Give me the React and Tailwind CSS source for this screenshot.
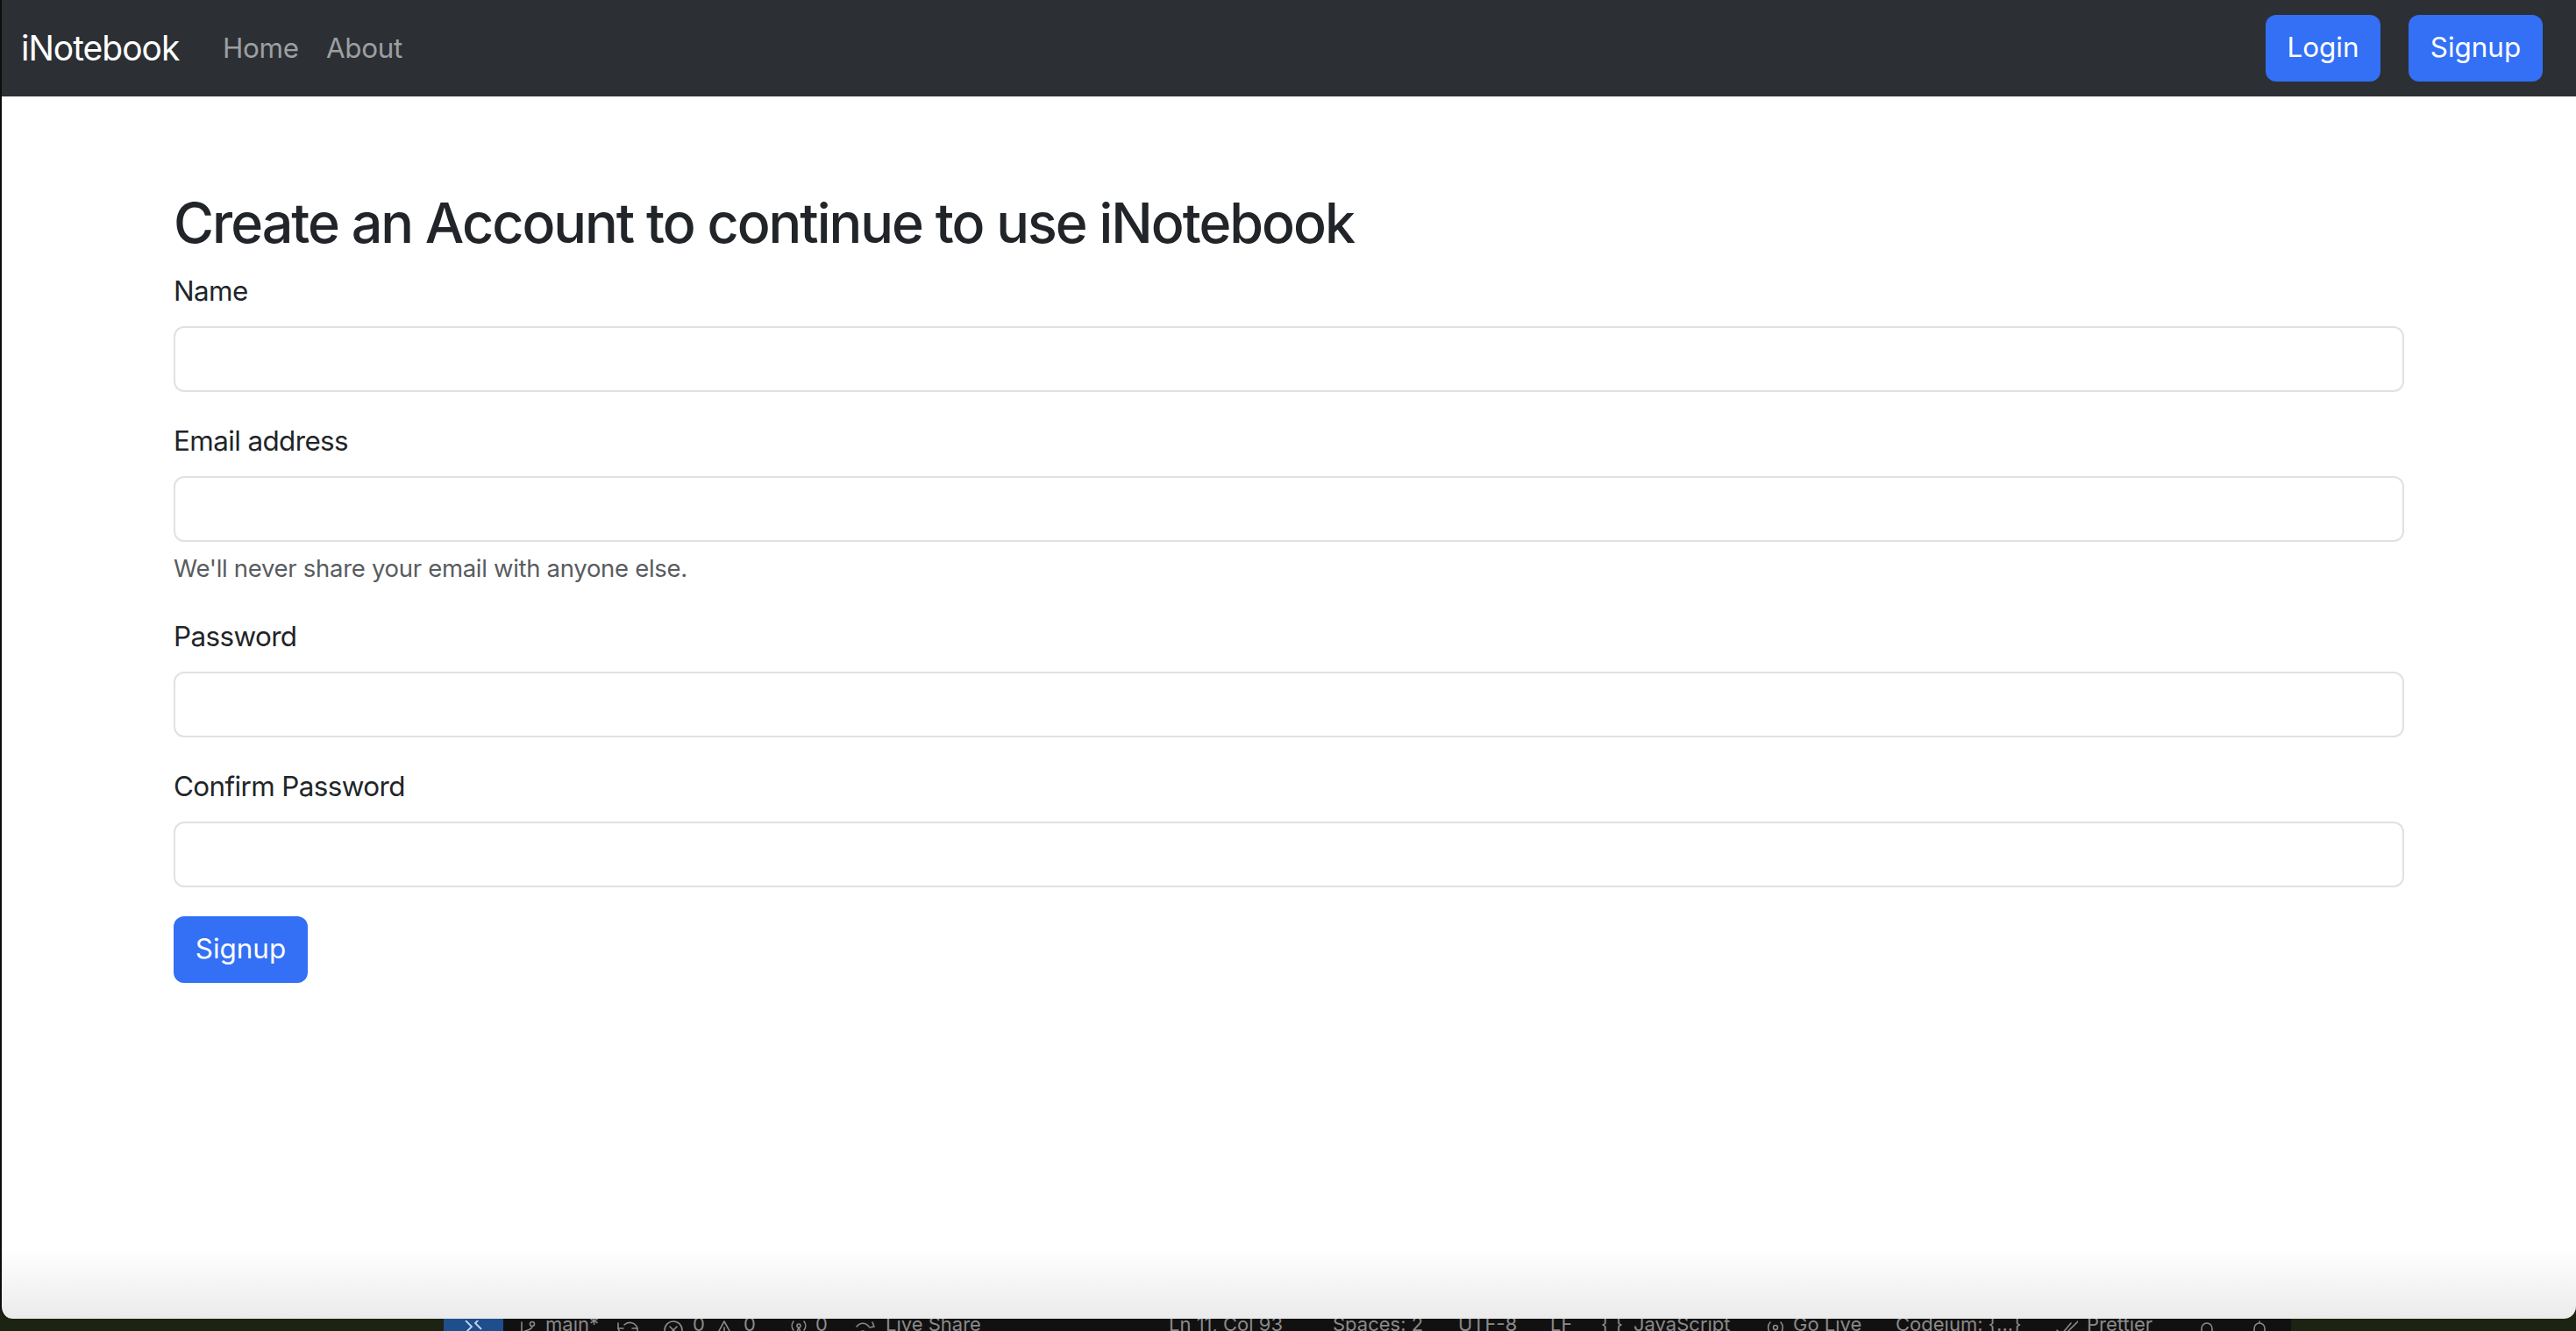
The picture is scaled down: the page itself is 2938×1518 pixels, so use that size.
import React from "react";

const Ico = ({ children, w = 24 }) => (
  <svg width={w} height="24" viewBox="0 0 24 24" fill="none" stroke="#8a8a8a" strokeWidth="1.6" strokeLinecap="round" strokeLinejoin="round" className="mt-[7px] block">
    {children}
  </svg>
);

function StatusBar() {
  return (
    <div className="flex h-[14px] overflow-hidden">
      <div className="w-[506px] shrink-0" />
      <div className="w-[68px] shrink-0 bg-[#1f4e8c] flex justify-center">
        <svg width="26" height="24" viewBox="0 0 26 24" fill="none" stroke="#c9d6ea" strokeWidth="1.8" className="mt-[2px]">
          <path d="M4 0 L11 7 L4 14" />
          <path d="M22 -4 L15 3 L22 10" />
        </svg>
      </div>
      <div className="w-[2039px] shrink-0 bg-[#111111] flex items-start text-[22px] leading-[24px] text-[#8a8a8a] whitespace-nowrap">
        <div className="flex items-start -mt-[6px]">
          <div className="w-[15px]" />
          <div className="w-[33px]"><Ico><circle cx="6" cy="19" r="2.5" /><circle cx="18" cy="5" r="2.5" /><path d="M6 3v13.5M18 7.5c0 6-12 4-12 9" /></Ico></div>
          <div className="w-[76px]">main*</div>
          <div className="w-[58px]"><Ico w={30}><path d="M4 10a9 9 0 0 0 15 4M26 10a9 9 0 0 0-15-4" /><path d="M4 4v6h6M26 16v-6h-6" /></Ico></div>
          <div className="w-[34px]"><Ico><circle cx="12" cy="12" r="10" /><path d="M8 8l8 8M16 8l-8 8" /></Ico></div>
          <div className="w-[22px]">0</div>
          <div className="w-[36px]"><Ico w={26}><path d="M13 2L24 22H2Z" /><path d="M13 9v6" /></Ico></div>
          <div className="w-[49px]">0</div>
          <div className="w-[33px]"><Ico w={26}><circle cx="13" cy="7" r="2" /><path d="M7 2a8 8 0 0 0 0 10M19 2a8 8 0 0 1 0 10M13 9l-5 13M13 9l5 13" /></Ico></div>
          <div className="w-[45px]">0</div>
          <div className="w-[35px]"><Ico><path d="M2 8c4-5 10-5 14 0M20 3l2 5-5 1" /><circle cx="9" cy="16" r="3" /></Ico></div>
          <div className="w-[323px]">Live Share</div>
          <div className="w-[187px]">Ln 11, Col 93</div>
          <div className="w-[143px]">Spaces: 2</div>
          <div className="w-[105px]">UTF-8</div>
          <div className="w-[58px]">LF</div>
          <div className="w-[37px]">{"{ }"}</div>
          <div className="w-[150px]">JavaScript</div>
          <div className="w-[32px]"><Ico><circle cx="12" cy="9" r="2.5" /><path d="M6 3a9 9 0 0 0 0 12M18 3a9 9 0 0 1 0 12M12 12v10" /></Ico></div>
          <div className="w-[117px]">Go Live</div>
          <div className="w-[180px]">Codeium: {"{...}"}</div>
          <div className="w-[38px]"><Ico w={28}><path d="M2 12l5 5L18 4M10 16l1 1L26 2" /></Ico></div>
          <div className="w-[125px]">Prettier</div>
          <div className="w-[60px]"><Ico><path d="M6 20V10a6 6 0 0 1 12 0v10M4 20h16" /></Ico></div>
          <div className="w-[48px]"><Ico><path d="M6 20V10a6 6 0 0 1 12 0v10M4 20h16M12 2v2" /></Ico></div>
        </div>
      </div>
    </div>
  );
}

function Field({ label, help }) {
  return (
    <div className="mb-[33px]">
      <label className="block text-[31.4px] leading-[47px] text-[#212529] mb-[16px] tracking-[-0.6px]">{label}</label>
      <input className="block w-full h-[75px] border-2 border-[#dee2e6] rounded-[12px] bg-white px-[24px] text-[31.4px] outline-none" />
      {help && (
        <div className="mt-[9px] text-[27.5px] leading-[43px] text-[#595c5f] tracking-[-0.3px]">{help}</div>
      )}
    </div>
  );
}

export default function App() {
  return (
    <div className="w-[2938px] h-[1518px] bg-[#1c2312] overflow-hidden font-['Inter','Noto_Sans',sans-serif]">
      <div className="h-[1504px] flex flex-col rounded-b-[14px] overflow-hidden border-l-2 border-[#0d0d0d] bg-[linear-gradient(to_bottom,#ffffff_calc(100%-80px),#ebebeb)]">
        <nav className="h-[110px] shrink-0 bg-[#2c3034] flex items-center pl-[22px] pr-[38px]">
          <div className="w-[214px] text-[39px] leading-[58px] text-white tracking-[-1px]">iNotebook</div>
          <a className="px-[16px] w-[118px] text-[31.4px] leading-[47px] text-[#9d9fa1] tracking-[-0.3px]">Home</a>
          <a className="px-[16px] text-[31.4px] leading-[47px] text-[#9d9fa1] tracking-[-0.3px]">About</a>
          <div className="ml-auto flex gap-[32px]">
            <button className="w-[131px] h-[76px] rounded-[12px] bg-[#3370f5] text-white text-[31.4px]">Login</button>
            <button className="w-[153px] h-[76px] rounded-[12px] bg-[#3370f5] text-white text-[31.4px]">Signup</button>
          </div>
        </nav>
        <main className="w-[2544px] mx-auto pt-[107px]">
          <h2 className="text-[62.8px] leading-[75px] font-medium text-[#212529] mb-[17px] tracking-[-2px]">
            Create an Account to continue to use iNotebook
          </h2>
          <Field label="Name" />
          <Field label="Email address" help="We'll never share your email with anyone else." />
          <Field label="Password" />
          <Field label="Confirm Password" />
          <button className="w-[153px] h-[76px] rounded-[12px] bg-[#3370f5] text-white text-[31.4px]">Signup</button>
        </main>
      </div>
      <StatusBar />
    </div>
  );
}
